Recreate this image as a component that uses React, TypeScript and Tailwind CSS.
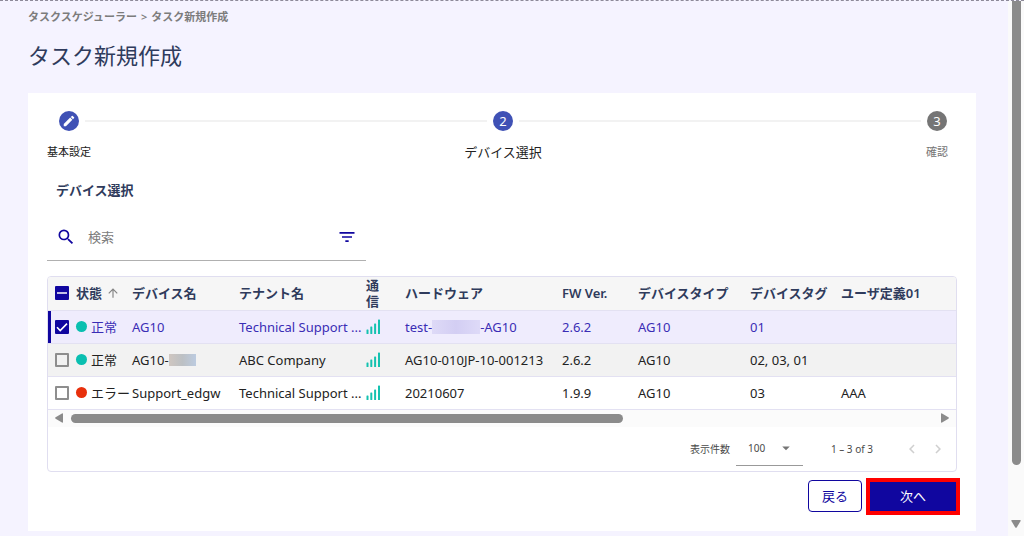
import clsx from "clsx"
import {
  MdArrowDropDown,
  MdArrowUpward,
  MdChevronLeft,
  MdChevronRight,
  MdEdit,
  MdFilterList,
  MdSearch,
} from "react-icons/md"

type Device = {
  id: number
  ok: boolean
  name: React.ReactNode
  tenant: string
  hardware: React.ReactNode
  firmware: string
  type: string
  tags: string
  user: string
  selected: boolean
}

const devices: Device[] = [
  {
    id: 1,
    ok: true,
    name: "AG10",
    tenant: "Technical Support ...",
    hardware: (
      <span className="flex items-center">
        test-
        <span className="h-3.5 w-12 bg-linear-to-r from-[#dedaf7] via-[#d3cef3] to-[#dedaf8]" />
        -AG10
      </span>
    ),
    firmware: "2.6.2",
    type: "AG10",
    tags: "01",
    user: "",
    selected: true,
  },
  {
    id: 2,
    ok: true,
    name: (
      <span className="flex items-center">
        AG10-
        <span className="h-3 w-[27px] bg-linear-to-r from-[#cfc6c0] via-[#bcc0c4] to-[#bccbe0]" />
      </span>
    ),
    tenant: "ABC Company",
    hardware: "AG10-010JP-10-001213",
    firmware: "2.6.2",
    type: "AG10",
    tags: "02, 03, 01",
    user: "",
    selected: false,
  },
  {
    id: 3,
    ok: false,
    name: "Support_edgw",
    tenant: "Technical Support ...",
    hardware: "20210607",
    firmware: "1.9.9",
    type: "AG10",
    tags: "03",
    user: "AAA",
    selected: false,
  },
]

const Checkbox: React.FC<{
  label: string
  checked: boolean
  partial?: boolean
}> = ({ label, checked, partial }) => (
  <span className="relative ml-[7px] block size-3.5">
    <input
      type="checkbox"
      aria-label={label}
      defaultChecked={checked}
      className="peer block size-3.5 appearance-none rounded-[1px] border-2 border-[#8e8e8e] checked:border-[#10069f] checked:bg-[#10069f]"
    />
    <svg
      viewBox="0 0 14 14"
      className="pointer-events-none absolute inset-0 hidden size-3.5 fill-none stroke-white peer-checked:block"
      strokeWidth="1.6"
    >
      <path d={partial ? "M2 7h10" : "M2 7.2l3.2 3.3L12 3.6"} />
    </svg>
  </span>
)

const Signal: React.FC = () => (
  <svg viewBox="0 0 15 15" className="size-[15px] fill-[#14c2b0]">
    <rect x="0.5" y="10.5" width="2" height="4.5" rx="0.6" />
    <rect x="4.3" y="7.5" width="2" height="7.5" rx="0.6" />
    <rect x="8.1" y="4.5" width="2" height="10.5" rx="0.6" />
    <rect x="12" y="0.5" width="2" height="14.5" rx="0.6" />
  </svg>
)

const Stepper: React.FC = () => (
  <div className="pr-[15px] pl-[17px]">
    <div className="flex items-center px-2">
      <span className="flex w-8 justify-center">
        <span className="flex size-5 items-center justify-center rounded-full bg-[#3f51b5] text-white">
          <MdEdit className="size-3.5" />
        </span>
      </span>
      <span className="h-0.5 flex-1 bg-[#f2f2f2]" />
      <span className="flex w-8 justify-center">
        <span className="flex size-5 items-center justify-center rounded-full bg-[#3f51b5] text-[13px] text-white">
          2
        </span>
      </span>
      <span className="h-0.5 flex-1 bg-[#f2f2f2]" />
      <span className="flex w-8 justify-center">
        <span className="flex size-5 items-center justify-center rounded-full bg-[#757575] text-[13px] text-white">
          3
        </span>
      </span>
    </div>
    <div className="mt-[11px] flex items-center leading-5 whitespace-nowrap">
      <p className="w-12 text-center text-[11px]">基本設定</p>
      <p className="flex-1 text-center text-[13px]">デバイス選択</p>
      <p className="w-12 text-center text-[11px] text-[#757575]">確認</p>
    </div>
  </div>
)

const DeviceTable: React.FC = () => (
  <table className="w-full table-fixed border-collapse text-left whitespace-nowrap">
    <colgroup>
      <col className="w-7" />
      <col className="w-14" />
      <col className="w-[107px]" />
      <col className="w-[127px]" />
      <col className="w-[39px]" />
      <col className="w-[157px]" />
      <col className="w-[76px]" />
      <col className="w-[112px]" />
      <col className="w-[91px]" />
      <col />
    </colgroup>
    <thead>
      <tr className="h-[33px] border-b border-[#e3e1f2] bg-[#f6f6f6] text-[#2f3b5c] *:p-0 *:font-semibold">
        <th>
          <Checkbox label="すべて選択" checked partial />
        </th>
        <th>
          <span className="flex items-center gap-1">
            状態
            <MdArrowUpward className="size-3.5 text-[#858585]" />
          </span>
        </th>
        <th>デバイス名</th>
        <th>テナント名</th>
        <th className="leading-4 whitespace-normal">
          <span className="block w-3.5">通信</span>
        </th>
        <th>ハードウェア</th>
        <th>FW Ver.</th>
        <th>デバイスタイプ</th>
        <th>デバイスタグ</th>
        <th>ユーザ定義01</th>
      </tr>
    </thead>
    <tbody>
      {devices.map((device) => (
        <tr
          key={device.id}
          className={clsx(
            "h-[33px] border-b border-[#e3e1f2] *:p-0",
            device.selected
              ? "bg-[#efecfd] text-[#3a2db5]"
              : "even:bg-[#f2f2f2]",
          )}
        >
          <td
            className={clsx(
              device.selected && "shadow-[inset_3px_0_0_#10069f]",
            )}
          >
            <Checkbox label="デバイスを選択" checked={device.selected} />
          </td>
          <td>
            <span className="flex items-center gap-1">
              <span
                className={clsx(
                  "size-[11px] shrink-0 rounded-full",
                  device.ok ? "bg-[#0abfb0]" : "bg-[#e8300c]",
                )}
              />
              {device.ok ? "正常" : "エラー"}
            </span>
          </td>
          <td>{device.name}</td>
          <td>{device.tenant}</td>
          <td>
            <Signal />
          </td>
          <td>{device.hardware}</td>
          <td>{device.firmware}</td>
          <td>{device.type}</td>
          <td>{device.tags}</td>
          <td>{device.user}</td>
        </tr>
      ))}
    </tbody>
  </table>
)

const HorizontalScroll: React.FC = () => (
  <div className="flex h-[17px] items-center bg-[#fbfbfb] px-[7px] text-[#8b8b8b]">
    <svg viewBox="0 0 8 10" className="h-2.5 w-2 fill-current">
      <path d="M7 0.4Q8 0 8 1v8q0 1-1 0.6L0.6 5.7q-0.9-0.7 0-1.4z" />
    </svg>
    <div className="mx-2 flex-1">
      <div className="h-[9px] w-[635px] max-w-[64%] rounded-full bg-current" />
    </div>
    <svg viewBox="0 0 8 10" className="h-2.5 w-2 fill-current">
      <path d="M1 0.4Q0 0 0 1v8q0 1 1 0.6L7.4 5.7q0.9-0.7 0-1.4z" />
    </svg>
  </div>
)

const Pagination: React.FC = () => (
  <div className="flex h-11 items-center justify-end pr-[9px] text-[10px] text-[#4a4a4a]">
    <label htmlFor="page-size">表示件数</label>
    <div className="relative mt-1 ml-1.5 w-[67px] border-b border-[#999]">
      <select
        id="page-size"
        defaultValue="100"
        className="block h-[30px] w-full appearance-none pb-1 pl-3"
      >
        <option>100</option>
        <option>50</option>
        <option>20</option>
      </select>
      <MdArrowDropDown className="pointer-events-none absolute top-1 right-2 size-[18px] text-[#757575]" />
    </div>
    <span className="ml-7">1 – 3 of 3</span>
    <button aria-label="前のページ" className="ml-[30px] text-[#cfcfcf]">
      <MdChevronLeft className="size-[18px]" />
    </button>
    <button aria-label="次のページ" className="ml-2 text-[#cfcfcf]">
      <MdChevronRight className="size-[18px]" />
    </button>
  </div>
)

const App: React.FC = () => {
  return (
    <div className="flex min-h-screen border-t border-dashed border-[#8d8a99] bg-[#f5f3ff] font-['Noto_Sans','Noto_Sans_CJK_JP',sans-serif] text-[13px] leading-5 text-[#222]">
      <main className="min-w-0 flex-1 pr-8 pb-1 pl-7">
        <nav className="mt-2 flex gap-1 text-[11px] leading-4 font-semibold text-[#7c7c7c]">
          <a href="#tasks">タスクスケジューラー</a>
          <span>&gt;</span>
          <span>タスク新規作成</span>
        </nav>
        <h1 className="mt-3.5 text-[22px] leading-8 text-[#2f3b5c]">
          タスク新規作成
        </h1>
        <div className="mt-[22px] bg-white pt-[18px] pb-4">
          <Stepper />
          <div className="px-[19px]">
            <h2 className="mt-[18px] ml-[9px] font-semibold text-[#2f3b5c]">
              デバイス選択
            </h2>
            <div className="mt-3.5 flex h-[47px] w-[319px] items-center border-b border-[#b0b0b0] px-[9px] text-[#10069f]">
              <MdSearch className="size-5" />
              <input
                type="search"
                aria-label="検索"
                placeholder="検索"
                className="ml-3 min-w-0 flex-1 text-[#222] outline-none placeholder:text-[#7c7c7c]"
              />
              <button aria-label="フィルター">
                <MdFilterList className="size-5" />
              </button>
            </div>
            <div className="mt-[15px] overflow-hidden rounded-[4px] border border-[#e0def0]">
              <DeviceTable />
              <HorizontalScroll />
              <Pagination />
            </div>
            <div className="mt-1.5 flex items-center justify-end gap-1">
              <button className="h-8 w-[54px] rounded-[4px] border border-[#10069f] text-[#10069f]">
                戻る
              </button>
              <button className="-mr-[3px] h-[37px] w-[94px] border-4 border-[#ff0000] bg-[#10069f] text-white">
                次へ
              </button>
            </div>
          </div>
        </div>
      </main>
      <div className="flex w-4 flex-col items-center justify-between bg-[#fafafa] pb-2">
        <div className="h-[88%] w-[9px] rounded-b-full bg-[#8b8b8b]" />
        <svg viewBox="0 0 10 8" className="h-2 w-2.5 fill-[#8b8b8b]">
          <path d="M0.4 1Q0 0 1 0h8q1 0 0.6 1L5.7 7.4q-0.7 0.9-1.4 0z" />
        </svg>
      </div>
    </div>
  )
}

export default App
